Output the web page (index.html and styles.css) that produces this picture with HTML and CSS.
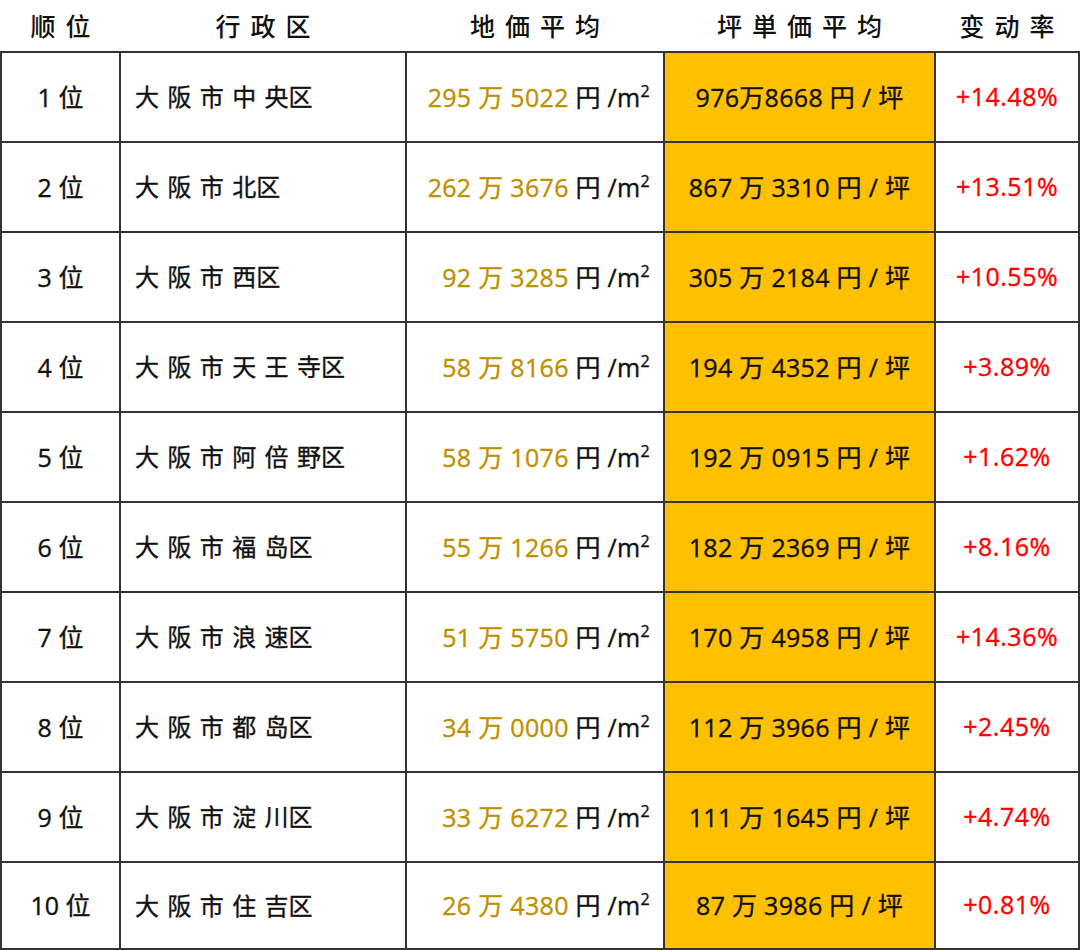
FILE: index.html
```html
<!DOCTYPE html>
<html lang="zh">
<head>
<meta charset="utf-8">
<link rel="stylesheet" href="styles.css">
</head>
<body>
<table class="rank">
  <colgroup>
    <col class="c1"><col class="c2"><col class="c3"><col class="c4"><col class="c5">
  </colgroup>
  <thead>
    <tr>
      <th>顺位</th><th>行政区</th><th>地価平均</th><th>坪単価平均</th><th>变动率</th>
    </tr>
  </thead>
  <tbody>
    <tr><td class="no">1 位</td><td class="area">大 阪 市 中 央区</td><td class="price"><span class="gold">295 万 5022</span> 円 /m<sup>2</sup></td><td class="tsubo">976万8668 円 / 坪</td><td class="rate">+14.48%</td></tr>
    <tr><td class="no">2 位</td><td class="area">大 阪 市 北区</td><td class="price"><span class="gold">262 万 3676</span> 円 /m<sup>2</sup></td><td class="tsubo">867 万 3310 円 / 坪</td><td class="rate">+13.51%</td></tr>
    <tr><td class="no">3 位</td><td class="area">大 阪 市 西区</td><td class="price"><span class="gold">92 万 3285</span> 円 /m<sup>2</sup></td><td class="tsubo">305 万 2184 円 / 坪</td><td class="rate">+10.55%</td></tr>
    <tr><td class="no">4 位</td><td class="area">大 阪 市 天 王 寺区</td><td class="price"><span class="gold">58 万 8166</span> 円 /m<sup>2</sup></td><td class="tsubo">194 万 4352 円 / 坪</td><td class="rate">+3.89%</td></tr>
    <tr><td class="no">5 位</td><td class="area">大 阪 市 阿 倍 野区</td><td class="price"><span class="gold">58 万 1076</span> 円 /m<sup>2</sup></td><td class="tsubo">192 万 0915 円 / 坪</td><td class="rate">+1.62%</td></tr>
    <tr><td class="no">6 位</td><td class="area">大 阪 市 福 岛区</td><td class="price"><span class="gold">55 万 1266</span> 円 /m<sup>2</sup></td><td class="tsubo">182 万 2369 円 / 坪</td><td class="rate">+8.16%</td></tr>
    <tr><td class="no">7 位</td><td class="area">大 阪 市 浪 速区</td><td class="price"><span class="gold">51 万 5750</span> 円 /m<sup>2</sup></td><td class="tsubo">170 万 4958 円 / 坪</td><td class="rate">+14.36%</td></tr>
    <tr><td class="no">8 位</td><td class="area">大 阪 市 都 岛区</td><td class="price"><span class="gold">34 万 0000</span> 円 /m<sup>2</sup></td><td class="tsubo">112 万 3966 円 / 坪</td><td class="rate">+2.45%</td></tr>
    <tr><td class="no">9 位</td><td class="area">大 阪 市 淀 川区</td><td class="price"><span class="gold">33 万 6272</span> 円 /m<sup>2</sup></td><td class="tsubo">111 万 1645 円 / 坪</td><td class="rate">+4.74%</td></tr>
    <tr class="last"><td class="no">10 位</td><td class="area">大 阪 市 住 吉区</td><td class="price"><span class="gold">26 万 4380</span> 円 /m<sup>2</sup></td><td class="tsubo">87 万 3986 円 / 坪</td><td class="rate">+0.81%</td></tr>
  </tbody>
</table>
</body>
</html>
```

FILE: styles.css
```css
html, body {
  margin: 0;
  padding: 0;
  background: #ffffff;
}
body {
  font-family: "Open Sans", "Noto Sans CJK SC", sans-serif;
  color: #111111;
}
.rank {
  border-collapse: collapse;
  table-layout: fixed;
  width: 1078px;
  margin-left: 0;
}
.c1 { width: 119px; }
.c2 { width: 286px; }
.c3 { width: 258px; }
.c4 { width: 271px; }
.c5 { width: 144px; }

.rank th {
  height: 49px;
  padding: 0 0 2px 0;
  font-family: "Noto Sans CJK SC", sans-serif;
  font-size: 25px;
  font-weight: 500;
  letter-spacing: 10px;
  text-indent: 10px;
  text-align: center;
  vertical-align: middle;
  color: #111111;
}
.rank td {
  height: 85px;
  padding: 0 0 3px 0;
  border: 2px solid #333333;
  vertical-align: middle;
  font-size: 25px;
  font-weight: 400;
  white-space: nowrap;
  -webkit-text-stroke: 0.35px currentColor;
}
.rank tr.last td {
  height: 82px;
}
.no {
  text-align: center;
  font-family: "Open Sans", "Noto Sans CJK SC", sans-serif;
}
.area {
  padding-left: 14px !important;
  font-family: "Noto Sans CJK SC", sans-serif;
  font-size: 24px !important;
  word-spacing: 3px;
}
.price {
  text-align: right;
  padding-right: 13px !important;
  letter-spacing: 0.3px;
}
.gold {
  color: #bf9000;
}
.price sup {
  font-size: 16px;
  vertical-align: 10px;
  line-height: 0;
}
.tsubo {
  background: #ffc000;
  text-align: center;
  letter-spacing: 0.3px;
}
.rate {
  text-align: center;
  color: #ff0000;
  letter-spacing: 0.5px;
}
```
